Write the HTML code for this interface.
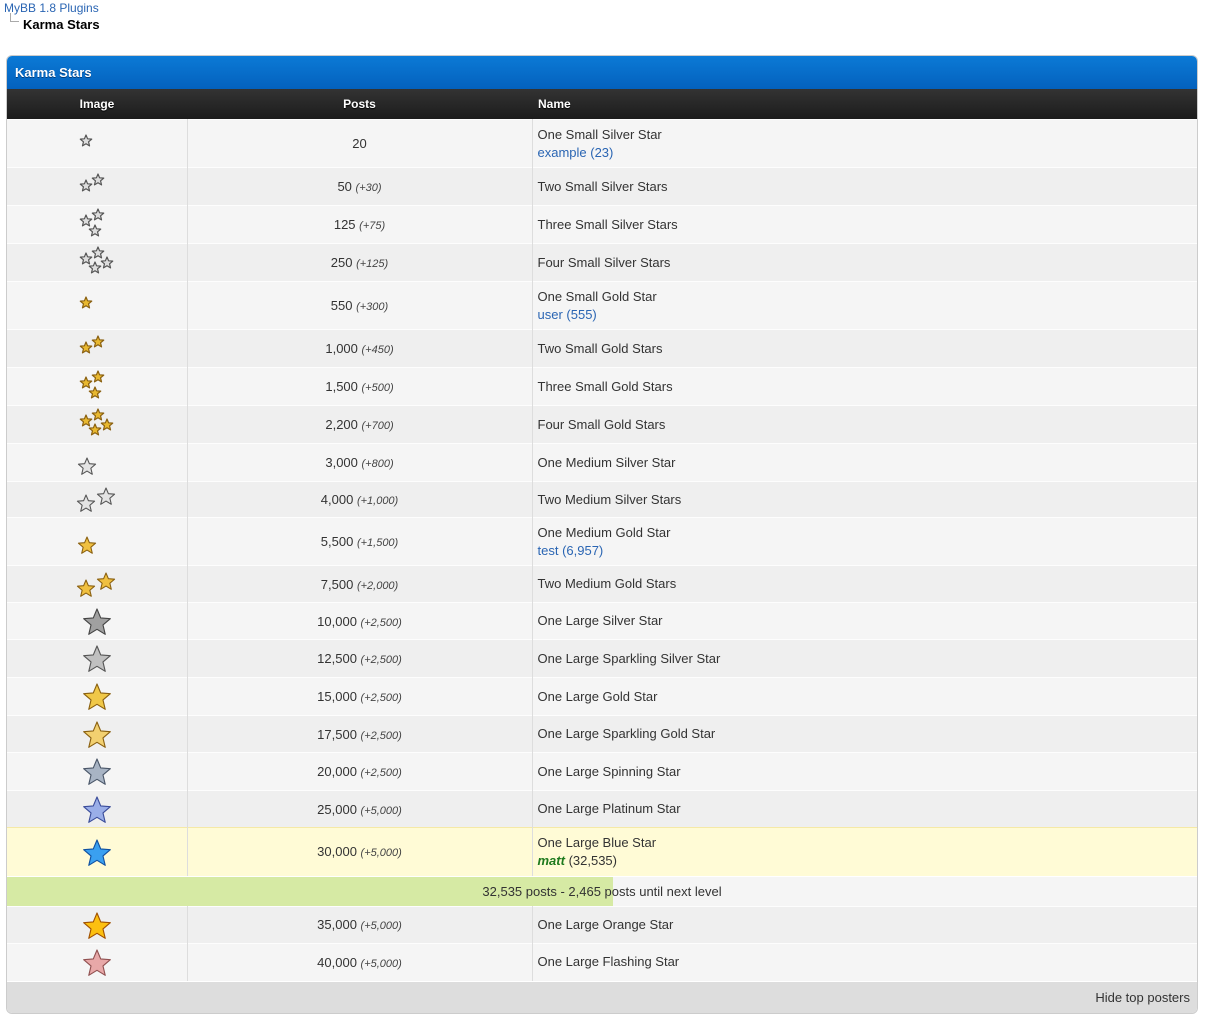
<!DOCTYPE html>
<html><head><meta charset="utf-8"><style>
body{margin:0;background:#fff;font-family:"Liberation Sans",Tahoma,sans-serif;font-size:13px;color:#333;width:1207px;height:1021px;position:relative;overflow:hidden}
.bc1{position:absolute;left:4px;top:1px;color:#2a65b3;font-size:12px}
.bc2{position:absolute;left:23px;top:17px;font-weight:bold;color:#000;font-size:13px}
.bcl{position:absolute;left:10px;top:13px;width:8px;height:8px;border-left:1px solid #aaa;border-bottom:1px solid #aaa}
.box{position:absolute;left:6px;top:55px;width:1190px;height:957px;border:1px solid #ccc;border-radius:6px;overflow:hidden;background:#fff}
.hd{height:33px;background:linear-gradient(#0b7ad6,#0461bd);color:#fff;font-weight:bold;font-size:13px;line-height:33px;padding-left:8px;text-shadow:0 1px 0 #003d7a}
table{border-collapse:collapse;table-layout:fixed;width:1190px}
th{height:30px;background:linear-gradient(#333,#1c1c1c);color:#fff;font-size:12px;font-weight:bold;text-shadow:0 1px 1px #000;padding:0}
th.l{text-align:left;padding-left:6px}
td{padding:0;border-top:1px solid #fdfdfd;border-right:1px solid #ddd;text-align:center;vertical-align:middle}
td.n{text-align:left;padding-left:5px;border-right:none;line-height:18px}
tr.a td{background:#f5f5f5}
tr.b td{background:#efefef}
tr.y td{background:#fffbd6;border-top:1px solid #f5e9a6}
i{font-size:11px;color:#444}
a{color:#2a65b3;text-decoration:none}
.prog{position:relative;height:29px;background:#f5f5f5;border-top:1px solid #fff}
.bar{position:absolute;left:0;top:0;width:606px;height:29px;background:#d6eaa4}
.pt{position:absolute;left:0;right:0;top:0;line-height:29px;text-align:center}
.ft{position:absolute;left:0;bottom:0;width:1190px;height:31px;background:#ddd;text-align:right;line-height:31px;box-sizing:border-box;padding-right:7px;font-size:13px}
svg.st{position:absolute;left:0;top:0}
</style></head><body>
<div class="bc1">MyBB 1.8 Plugins</div>
<div class="bcl"></div>
<div class="bc2">Karma Stars</div>
<div class="box">
<div class="hd">Karma Stars</div>
<table>
<colgroup><col style="width:180px"><col style="width:345px"><col></colgroup>
<tr><th>Image</th><th>Posts</th><th class="l">Name</th></tr>
<tr class="a" style="height:48px"><td></td><td>20</td><td class="n">One Small Silver Star<br><a>example (23)</a></td></tr>
<tr class="b" style="height:38px"><td></td><td>50 <i>(+30)</i></td><td class="n">Two Small Silver Stars</td></tr>
<tr class="a" style="height:38px"><td></td><td>125 <i>(+75)</i></td><td class="n">Three Small Silver Stars</td></tr>
<tr class="b" style="height:38px"><td></td><td>250 <i>(+125)</i></td><td class="n">Four Small Silver Stars</td></tr>
<tr class="a" style="height:48px"><td></td><td>550 <i>(+300)</i></td><td class="n">One Small Gold Star<br><a>user (555)</a></td></tr>
<tr class="b" style="height:38px"><td></td><td>1,000 <i>(+450)</i></td><td class="n">Two Small Gold Stars</td></tr>
<tr class="a" style="height:38px"><td></td><td>1,500 <i>(+500)</i></td><td class="n">Three Small Gold Stars</td></tr>
<tr class="b" style="height:38px"><td></td><td>2,200 <i>(+700)</i></td><td class="n">Four Small Gold Stars</td></tr>
<tr class="a" style="height:38px"><td></td><td>3,000 <i>(+800)</i></td><td class="n">One Medium Silver Star</td></tr>
<tr class="b" style="height:36px"><td></td><td>4,000 <i>(+1,000)</i></td><td class="n">Two Medium Silver Stars</td></tr>
<tr class="a" style="height:48px"><td></td><td>5,500 <i>(+1,500)</i></td><td class="n">One Medium Gold Star<br><a>test (6,957)</a></td></tr>
<tr class="b" style="height:37px"><td></td><td>7,500 <i>(+2,000)</i></td><td class="n">Two Medium Gold Stars</td></tr>
<tr class="a" style="height:37px"><td></td><td>10,000 <i>(+2,500)</i></td><td class="n">One Large Silver Star</td></tr>
<tr class="b" style="height:38px"><td></td><td>12,500 <i>(+2,500)</i></td><td class="n">One Large Sparkling Silver Star</td></tr>
<tr class="a" style="height:38px"><td></td><td>15,000 <i>(+2,500)</i></td><td class="n">One Large Gold Star</td></tr>
<tr class="b" style="height:37px"><td></td><td>17,500 <i>(+2,500)</i></td><td class="n">One Large Sparkling Gold Star</td></tr>
<tr class="a" style="height:38px"><td></td><td>20,000 <i>(+2,500)</i></td><td class="n">One Large Spinning Star</td></tr>
<tr class="b" style="height:37px"><td></td><td>25,000 <i>(+5,000)</i></td><td class="n">One Large Platinum Star</td></tr>
<tr class="y" style="height:48px"><td></td><td>30,000 <i>(+5,000)</i></td><td class="n">One Large Blue Star<br><b style="color:#1e7a1e;font-style:italic">matt</b> (32,535)</td></tr>
<tr><td colspan="3" style="padding:0;border:none"><div class="prog"><div class="bar"></div><div class="pt">32,535 posts - 2,465 posts until next level</div></div></td></tr>
<tr class="b" style="height:37px"><td></td><td>35,000 <i>(+5,000)</i></td><td class="n">One Large Orange Star</td></tr>
<tr class="a" style="height:38px"><td></td><td>40,000 <i>(+5,000)</i></td><td class="n">One Large Flashing Star</td></tr>
</table>
<div class="ft">Hide top posters</div>
</div>
<svg class="st" width="1207" height="1021" viewBox="0 0 1207 1021">
<defs><polygon id="s" points="0,-1 0.265,-0.364 0.951,-0.309 0.428,0.139 0.588,0.809 0,0.45 -0.588,0.809 -0.428,0.139 -0.951,-0.309 -0.265,-0.364"/></defs>
<g stroke="#555" stroke-linejoin="round">
<g fill="#ddd" stroke-width="0.2">
<use href="#s" transform="translate(86,141) scale(6)"/>
<use href="#s" transform="translate(86,186) scale(6)"/><use href="#s" transform="translate(98,180) scale(6)"/>
<use href="#s" transform="translate(86,221) scale(6)"/><use href="#s" transform="translate(98,215) scale(6)"/><use href="#s" transform="translate(95,231) scale(6)"/>
<use href="#s" transform="translate(86,259) scale(6)"/><use href="#s" transform="translate(98,253) scale(6)"/><use href="#s" transform="translate(95,268) scale(6)"/><use href="#s" transform="translate(107,263) scale(6)"/>
</g>
<g fill="#e8b830" stroke="#8a6010" stroke-width="0.2">
<use href="#s" transform="translate(86,303) scale(6)"/>
<use href="#s" transform="translate(86,348) scale(6)"/><use href="#s" transform="translate(98,342) scale(6)"/>
<use href="#s" transform="translate(86,383) scale(6)"/><use href="#s" transform="translate(98,377) scale(6)"/><use href="#s" transform="translate(95,393) scale(6)"/>
<use href="#s" transform="translate(86,421) scale(6)"/><use href="#s" transform="translate(98,415) scale(6)"/><use href="#s" transform="translate(95,430) scale(6)"/><use href="#s" transform="translate(107,425) scale(6)"/>
</g>
<g fill="#e4e4e4" stroke-width="0.12">
<use href="#s" transform="translate(87,467) scale(9)"/>
<use href="#s" transform="translate(86,504) scale(9)"/><use href="#s" transform="translate(106,497) scale(9)"/>
</g>
<g fill="#f0c040" stroke="#8a6010" stroke-width="0.12">
<use href="#s" transform="translate(87,546) scale(9)"/>
<use href="#s" transform="translate(86,589) scale(9)"/><use href="#s" transform="translate(106,582) scale(9)"/>
</g>
<g stroke-width="0.08">
<use href="#s" fill="#a0a0a0" stroke="#444" transform="translate(97,623) scale(14)"/>
<use href="#s" fill="#c0c0c0" stroke="#555" transform="translate(97,660) scale(14)"/>
<use href="#s" fill="#f0c848" stroke="#8a6010" transform="translate(97,698) scale(14)"/>
<use href="#s" fill="#f2d070" stroke="#8a6010" transform="translate(97,736) scale(14)"/>
<use href="#s" fill="#a8b4c4" stroke="#4a5668" transform="translate(97,773) scale(14)"/>
<use href="#s" fill="#9aaee8" stroke="#3a4c9a" transform="translate(97,811) scale(14)"/>
<use href="#s" fill="#3aa0f0" stroke="#1050a0" transform="translate(97,854) scale(14)"/>
<use href="#s" fill="#fcc010" stroke="#a05000" transform="translate(97,927) scale(14)"/>
<use href="#s" fill="#e8a8a8" stroke="#905050" transform="translate(97,964) scale(14)"/>
</g>
</g>
</svg>
</body></html>
